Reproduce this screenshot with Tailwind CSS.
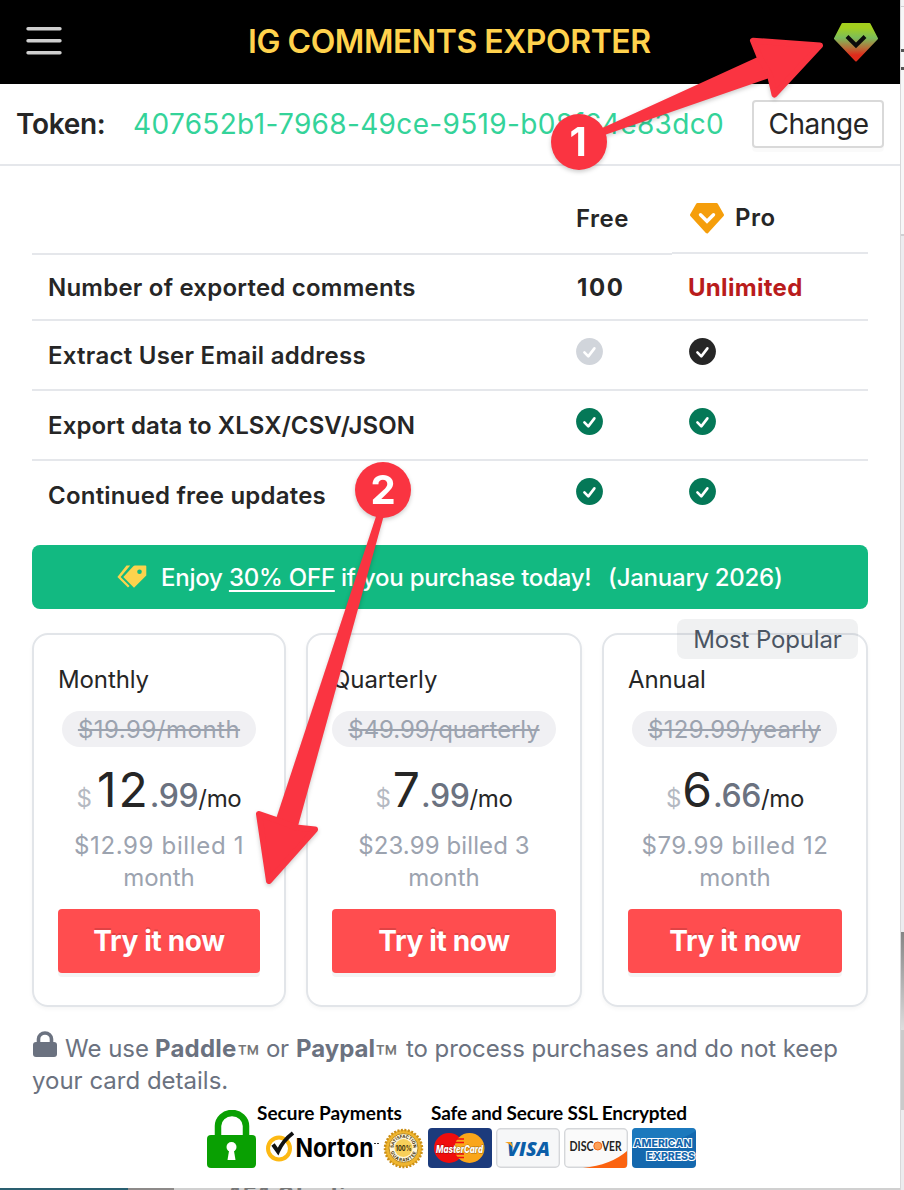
<!DOCTYPE html>
<html lang="en">
<head>
<meta charset="utf-8">
<title>IG Comments Exporter</title>
<script src="https://cdn.jsdelivr.net/npm/@tailwindcss/browser@4"></script>
</head>
<body class="bg-[#e9e9eb] font-['Inter',sans-serif] text-2xl text-[#262626]">
<svg class="hidden">
  <symbol id="check" viewBox="0 0 27 27"><circle cx="13.5" cy="13.5" r="13.4" fill="currentColor"/><path d="M8.4 14.4l3.9 4L18.4 10.4" fill="none" stroke="#fff" stroke-width="2.6" stroke-linecap="round" stroke-linejoin="round"/></symbol>
</svg>
<div class="relative flex h-[1190px] w-[904px] overflow-hidden">
  <main class="flex h-[1188px] w-[900px] flex-col bg-white shadow-[0_0_3px_#0005]">
    <header class="flex h-[84px] shrink-0 items-center bg-black pl-[26px]">
      <svg class="mr-[186px] h-10 w-9" viewBox="0 0 36 40" stroke="#cfcfcf" stroke-width="3.4" stroke-linecap="round"><path d="M2 6.700h32M2 18.700h32M2 30.700h32"/></svg>
      <h1 class="w-[586px] text-[32px] leading-10 font-semibold tracking-[-0.45px] whitespace-nowrap text-[#ffd24d]">IG COMMENTS EXPORTER</h1>
      <svg class="-mt-px h-10 w-11" viewBox="0 0 44 40"><defs><linearGradient id="gem" x2="0" y2="1"><stop offset=".1" stop-color="#a3cf1e"/><stop offset=".38" stop-color="#7cbd5a"/><stop offset=".65" stop-color="#b5713a"/><stop offset=".85" stop-color="#e02b1b"/></linearGradient></defs><path d="M8.5 2h27L43 16.500 22 38.500 1 16.500z" fill="url(#gem)" stroke="url(#gem)" stroke-width="2" stroke-linejoin="round"/><path d="M13 14.500l9 9 9-9" fill="none" stroke="#0b0b0b" stroke-width="4"/></svg>
    </header>
    <section class="flex h-[82px] shrink-0 items-center border-b-2 border-[#e5e7eb] pl-4 text-[28px]">
      <span class="w-[117px] pt-0.5 font-semibold tracking-[-0.3px]">Token:</span>
      <span class="w-[619px] pt-0.5 tracking-[0.34px] text-[#34d399]">407652b1-7968-49ce-9519-b08f64e83dc0</span>
      <button class="h-12 w-[132px] rounded-[4px] border-2 border-[#d9d9d9] pt-px pl-px text-center tracking-[-0.46px] shadow-[0_4px_0_#00000005]">Change</button>
    </section>

    <table class="mx-8 table-fixed border-separate border-spacing-0 font-semibold">
      <colgroup><col class="w-[528px]"><col class="w-[112px]"><col class="w-[196px]"></colgroup>
      <tbody class="[&_td]:p-0 [&_td]:pl-4">
        <tr class="h-[89px]">
          <td class="border-b-2 border-[#e5e7eb]"></td>
          <td class="border-b-2 border-[#e5e7eb] pt-[19px]! tracking-[0.5px]">Free</td>
          <td class="pt-0! pl-0! align-top"><div class="flex h-[88px] items-center border-b-2 border-[#e5e7eb] pt-[18px] pl-[18px]"><svg class="mr-[11px] h-[31px] w-[34px]" viewBox="0 0 34 31"><path d="M7.500 1.500h19L32.500 12 17 29 1.500 12z" fill="#f59e0b" stroke="#f59e0b" stroke-width="3" stroke-linejoin="round"/><path d="M10.500 11.800l6.500 6.500 6.500-6.500" fill="none" stroke="#fff" stroke-width="3.400" stroke-linecap="round"/></svg><span class="tracking-[0.5px]">Pro</span></div></td>
        </tr>
        <tr class="h-[66px] [&>td]:border-b-2 [&>td]:border-[#e5e7eb] [&>td]:pt-0.5"><td class="tracking-[0.22px]">Number of exported comments</td><td class="pl-[17px]! font-bold tracking-[1.6px]">100</td><td class="font-bold tracking-[0.3px] text-[#b91c1c]">Unlimited</td></tr>
        <tr class="h-[70px] [&>td]:border-b-2 [&>td]:border-[#e5e7eb]"><td class="pt-0.5! tracking-[0.26px]">Extract User Email address</td><td><svg class="mb-2 size-[27px] text-[#d1d5db]"><use href="#check"/></svg></td><td><svg class="mb-2 ml-px size-[27px] text-[#262626]"><use href="#check"/></svg></td></tr>
        <tr class="h-[70px] [&>td]:border-b-2 [&>td]:border-[#e5e7eb]"><td class="pt-0.5! tracking-[0.1px]">Export data to XLSX/CSV/JSON</td><td><svg class="mb-2 size-[27px] text-[#047857]"><use href="#check"/></svg></td><td><svg class="mb-2 ml-px size-[27px] text-[#047857]"><use href="#check"/></svg></td></tr>
        <tr class="h-[68px]"><td class="pt-0.5! tracking-[0.22px]">Continued free updates</td><td><svg class="mb-2 size-[27px] text-[#047857]"><use href="#check"/></svg></td><td><svg class="mb-2 ml-px size-[27px] text-[#047857]"><use href="#check"/></svg></td></tr>
      </tbody>
    </table>

    <div class="mx-8 mt-4 flex h-16 shrink-0 items-center rounded-lg bg-[#12b981] pl-[85px] font-medium whitespace-nowrap text-white">
      <svg class="mr-[14px] h-6 w-[30px]" viewBox="0 0 30 24"><path d="M9.500 .5H13.200L3.600 11.900 12.600 21 11 22.600 .4 11.900zM18 .5H28.500q.8 0 .8.8V10.500L17 22.800 6.300 11.900 16.300 1.200q.7-.7 1.700-.7z" fill="#fcd34d"/><circle cx="22.500" cy="6.800" r="2.300" fill="#12b981"/></svg>
      <span class="w-[447px] pt-0.5 tracking-[-0.22px]">Enjoy <span class="underline decoration-2 underline-offset-4">30% OFF</span> if you purchase today!</span>
      <span class="pt-0.5 tracking-[-0.22px]">(January 2026)</span>
    </div>

    <section class="mx-8 mt-6 grid h-[374px] shrink-0 grid-cols-[254px_276px_266px] gap-5 [&>article]:relative [&>article]:flex [&>article]:flex-col [&>article]:items-center [&>article]:rounded-2xl [&>article]:border-2 [&>article]:border-[#e2e5e9] [&>article]:px-6 [&>article]:pt-[29px] [&>article]:shadow-[0_2px_4px_#0000000a]">
      <article>
        <h2 class="h-8 self-start leading-8 tracking-[-0.1px]">Monthly</h2>
        <p class="mt-[15px] h-9 w-[194px] rounded-full bg-[#f0f0f3] text-center leading-[38px] tracking-[0.5px] text-[#9ca3af] line-through decoration-2">$19.99/month</p>
        <p class="mt-[3px] flex h-[76px] items-baseline leading-[79px] whitespace-nowrap"><span class="mr-[5px] text-[#b4b9c2]">$</span><span class="text-5xl leading-[79px] tracking-[2px]">12</span><span class="text-[32px] font-medium tracking-[-0.4px] text-[#6b7280]">.99</span><span class="tracking-[-0.35px]">/mo</span></p>
        <p class="mt-1 text-center leading-8 text-[#9ca3af]"><span class="tracking-[0.65px]">$12.99 billed 1</span><br>month</p>
        <button class="mt-[15px] h-16 w-full rounded-[4px] bg-[#ff4d4f] pt-0.5 text-[28px] font-bold tracking-[-0.36px] text-white shadow-[0_4px_0_#0000000b] [text-shadow:0_-2px_0_#0000001f]">Try it now</button>
      </article>
      <article>
        <h2 class="h-8 self-start leading-8 tracking-[-0.05px]">Quarterly</h2>
        <p class="mt-[15px] h-9 w-[224px] rounded-full bg-[#f0f0f3] text-center leading-[38px] tracking-[-0.08px] text-[#9ca3af] line-through decoration-2">$49.99/quarterly</p>
        <p class="mt-[3px] flex h-[76px] items-baseline leading-[79px] whitespace-nowrap"><span class="mr-[2px] text-[#b4b9c2]">$</span><span class="text-5xl leading-[79px] tracking-[1px]">7</span><span class="text-[32px] font-medium tracking-[-0.4px] text-[#6b7280]">.99</span><span class="tracking-[-0.35px]">/mo</span></p>
        <p class="mt-1 text-center leading-8 text-[#9ca3af]"><span class="tracking-[0.1px]">$23.99 billed 3</span><br>month</p>
        <button class="mt-[15px] h-16 w-full rounded-[4px] bg-[#ff4d4f] pt-0.5 text-[28px] font-bold tracking-[-0.36px] text-white shadow-[0_4px_0_#0000000b] [text-shadow:0_-2px_0_#0000001f]">Try it now</button>
      </article>
      <article>
        <span class="absolute -top-4 right-2 h-10 w-[181px] rounded-lg bg-[#6b72801a] text-center leading-[42px] tracking-[-0.15px] text-[#4b5563]">Most Popular</span>
        <h2 class="h-8 self-start leading-8 tracking-[-0.1px]">Annual</h2>
        <p class="mt-[15px] mr-px h-9 w-[205px] rounded-full bg-[#f0f0f3] text-center leading-[38px] tracking-[0.3px] text-[#9ca3af] line-through decoration-2">$129.99/yearly</p>
        <p class="mt-[3px] flex h-[76px] items-baseline leading-[79px] whitespace-nowrap"><span class="mr-[1px] text-[#b4b9c2]">$</span><span class="text-5xl leading-[79px] tracking-[1px]">6</span><span class="text-[32px] font-medium tracking-[-0.4px] text-[#6b7280]">.66</span><span class="tracking-[-0.35px]">/mo</span></p>
        <p class="mt-1 text-center leading-8 text-[#9ca3af]"><span class="tracking-[0.55px]">$79.99 billed 12</span><br>month</p>
        <button class="mt-[15px] h-16 w-full rounded-[4px] bg-[#ff4d4f] pt-0.5 text-[28px] font-bold tracking-[-0.36px] text-white shadow-[0_4px_0_#0000000b] [text-shadow:0_-2px_0_#0000001f]">Try it now</button>
      </article>
    </section>

    <section class="mx-8 mt-[26px] h-16 shrink-0 leading-8 whitespace-nowrap text-[#6b7280]">
      <div class="flex h-8">
        <svg class="-mt-0.5 mr-2 ml-[1px] h-[26px] w-[24px]" viewBox="0 0 24 26"><path d="M5.500 12V8a6.500 6 0 0113 0v4" fill="none" stroke="#6b7280" stroke-width="3.600"/><rect y="11" width="24" height="15" rx="3" fill="#6b7280"/></svg>
        <span class="w-[90px]">We use</span><b class="w-[82px] tracking-[0.2px]">Paddle</b>
        <span class="mt-[10px] w-[29px] text-[37px] text-[#777]">™</span><span class="w-[30px] tracking-[-0.4px]">or</span>
        <b class="w-[79px]">Paypal</b><span class="mt-[10px] w-[31px] text-[37px] text-[#777]">™</span><span class="tracking-[-0.08px]">to process purchases and do not keep</span>
      </div>
      <p>your card details.</p>
    </section>

    <section class="mt-1.5 ml-[207px] flex h-[70px] w-[490px] text-black">
      <svg class="mt-[7px] h-[60px] w-[50px]" viewBox="0 0 50 60"><path d="M11 26V16a14 13 0 0128 0v10" fill="none" stroke="#09a002" stroke-width="6.500"/><rect y="25" width="49" height="33" rx="4" fill="#09a002"/><circle cx="24.500" cy="37" r="5" fill="#fff"/><path d="M22.500 38h4l2 12h-8z" fill="#fff"/></svg>
      <div class="flex flex-col">
        <div class="flex h-[24px] font-['Lato',sans-serif] text-[19px] leading-[20px] font-bold whitespace-nowrap"><span class="w-[174px]">Secure Payments</span><span class="tracking-[-0.14px]">Safe and Secure SSL Encrypted</span></div>
        <div class="flex h-[42px] items-center">
          <svg class="h-[42px] w-[440px]" viewBox="257 1127 440 42">
            <circle cx="279" cy="1148.500" r="11" fill="none" stroke="#fdb913" stroke-width="4"/><path d="M273 1144.500l5 7q5-11 15-18.500" fill="none" stroke="#111" stroke-width="4"/>
            <text x="295.500" y="1156.500" font-family="Inter,sans-serif" font-size="26" font-weight="700" textLength="78" lengthAdjust="spacingAndGlyphs" fill="#000">Norton</text><path d="M374 1143.500h2M377 1143.500h2" stroke="#333"/>
            <circle cx="403.500" cy="1148.500" r="18.500" fill="#efb52e" stroke="#c98d16" stroke-width="2.500" stroke-dasharray="2 1.500"/><circle cx="403.500" cy="1148" r="14.500" fill="#fff7dc" stroke="#b98a20"/><circle cx="403.500" cy="1148" r="9" fill="#f7cf5a"/>
            <path id="ringT" d="M393.500 1148a10 10 0 0120 0" fill="none"/><path id="ringB" d="M390 1148a13.500 13.500 0 0027 0" fill="none"/>
            <g font-family="Inter,sans-serif" font-weight="700" fill="#3b2d0a"><text font-size="4.500"><textPath href="#ringT" textLength="31" lengthAdjust="spacingAndGlyphs">SATISFACTION</textPath></text><text font-size="4.500"><textPath href="#ringB" startOffset="4" textLength="34">GUARANTEE</textPath></text><text x="395.500" y="1151" font-size="8" textLength="16" lengthAdjust="spacingAndGlyphs">100%</text></g>
            <rect x="428" y="1128" width="64" height="40" rx="4" fill="#1c3b7c"/><circle cx="449" cy="1148" r="15" fill="#f00d0d"/><circle cx="469.500" cy="1148" r="15" fill="#faa61a"/><path d="M456 1139h8M455 1142.500h9M455 1154h9M456 1157.500h8" stroke="#f00d0d" stroke-width="1.500"/><text x="436" y="1152.500" font-family="Inter,sans-serif" font-size="11" font-style="italic" font-weight="800" textLength="47" lengthAdjust="spacingAndGlyphs" fill="#fff" stroke="#0006" stroke-width="1" paint-order="stroke">MasterCard</text>
            <rect x="496.700" y="1128.700" width="62.600" height="38.600" rx="4" fill="#f6f7f8" stroke="#d5d7da" stroke-width="1.400"/><text x="507" y="1156" font-family="Open Sans,sans-serif" font-size="19" font-style="italic" font-weight="800" textLength="43" lengthAdjust="spacingAndGlyphs" fill="#0b5ea8">VISA</text><path d="M505 1142h6l2.500 6q-3-4-8.500-6z" fill="#f7a21b"/>
            <rect x="564.700" y="1128.700" width="62.600" height="38.600" rx="4" fill="#fafafa" stroke="#d5d7da" stroke-width="1.400"/><path d="M583 1168q28-3 44-17v14q0 3-3 3z" fill="#fb6310"/><g font-family="Lato,sans-serif" font-size="12.500" font-weight="700" fill="#222"><text x="569.500" y="1150.500" textLength="24" lengthAdjust="spacingAndGlyphs">DISC</text><text x="602" y="1150.500" textLength="19.500" lengthAdjust="spacingAndGlyphs">VER</text></g><circle cx="597.800" cy="1146" r="4" fill="#fca15a" stroke="#f26a1b"/>
            <rect x="632" y="1128" width="64" height="40" rx="4" fill="#1468ae"/><path d="M632 1138v-6q0-4 4-4h56q3 0 3.500 3-20 14-63.500 15z" fill="#2389cb" opacity=".5"/><g font-family="Inter,sans-serif" font-weight="800" font-size="11" fill="#1468ae" stroke="#fff" stroke-width="2.200" paint-order="stroke"><text x="633.500" y="1147" textLength="58" lengthAdjust="spacingAndGlyphs">AMERICAN</text><text x="646.500" y="1160" textLength="48.500" lengthAdjust="spacingAndGlyphs">EXPRESS</text></g>
          </svg>
        </div>
      </div>
    </section>
  </main>

  <aside class="flex w-1 flex-col border-l border-[#d8d8da]">
    <div class="h-[6px] bg-[#f4f4f5]"></div><div class="h-[43px] border-t border-[#cfcfd2] bg-[#f7f7f8]"></div><div class="h-[3px] bg-[#555]"></div><div class="h-[15px] bg-[#f7f7f8]"></div><div class="h-[3px] bg-[#555]"></div><div class="h-[164px] bg-[#f7f7f8]"></div><div class="h-[698px] border-t-2 border-[#cfcfd2] bg-[#ececef]"></div><div class="h-[98px] bg-linear-to-b from-[#858585] to-[#dedede]"></div><div class="h-20 bg-[#cacaca]"></div><div class="flex-1 bg-[#ececee]"></div>
  </aside>

  <div class="absolute top-[1188px] left-0 flex h-0.5 w-[900px] overflow-hidden bg-[#d0d0d0]"><span class="w-[128px] bg-[#2a5f70]"></span><span class="w-[46px] bg-[#8d8a89]"></span><span class="-mt-1 ml-[56px] font-bold leading-6 tracking-[1.6px] text-[#777]">151 Studio</span></div>

  <svg class="absolute inset-0 h-[1190px] w-[904px] drop-shadow-[0_2px_2px_#0003]" viewBox="0 0 904 1190" fill="#fa3441" stroke="#fa3441" stroke-linejoin="round">
    <path d="M600 129L606.700 126 760 56 770 77.700 606.700 134.300 600 137z" stroke="none"/>
    <path d="M753 40.700L820 45.500 774.500 94.500 770 75 760.500 59z" stroke-width="6"/>
    <circle cx="579" cy="142" r="28" stroke="none"/>
    <path d="M376.500 515L384 515 298 826 276 819z" stroke="none"/>
    <path d="M259 814L279.500 821 296 827.500 315 829.500 269 881z" stroke-width="6"/>
    <circle cx="383" cy="490" r="28" stroke="none"/>
    <g fill="#fff" stroke="none" font-family="Inter,sans-serif" font-size="40" font-weight="700" text-anchor="middle"><text x="578" y="156">1</text><text x="383" y="503.500">2</text></g>
  </svg>
</div>
</body>
</html>
